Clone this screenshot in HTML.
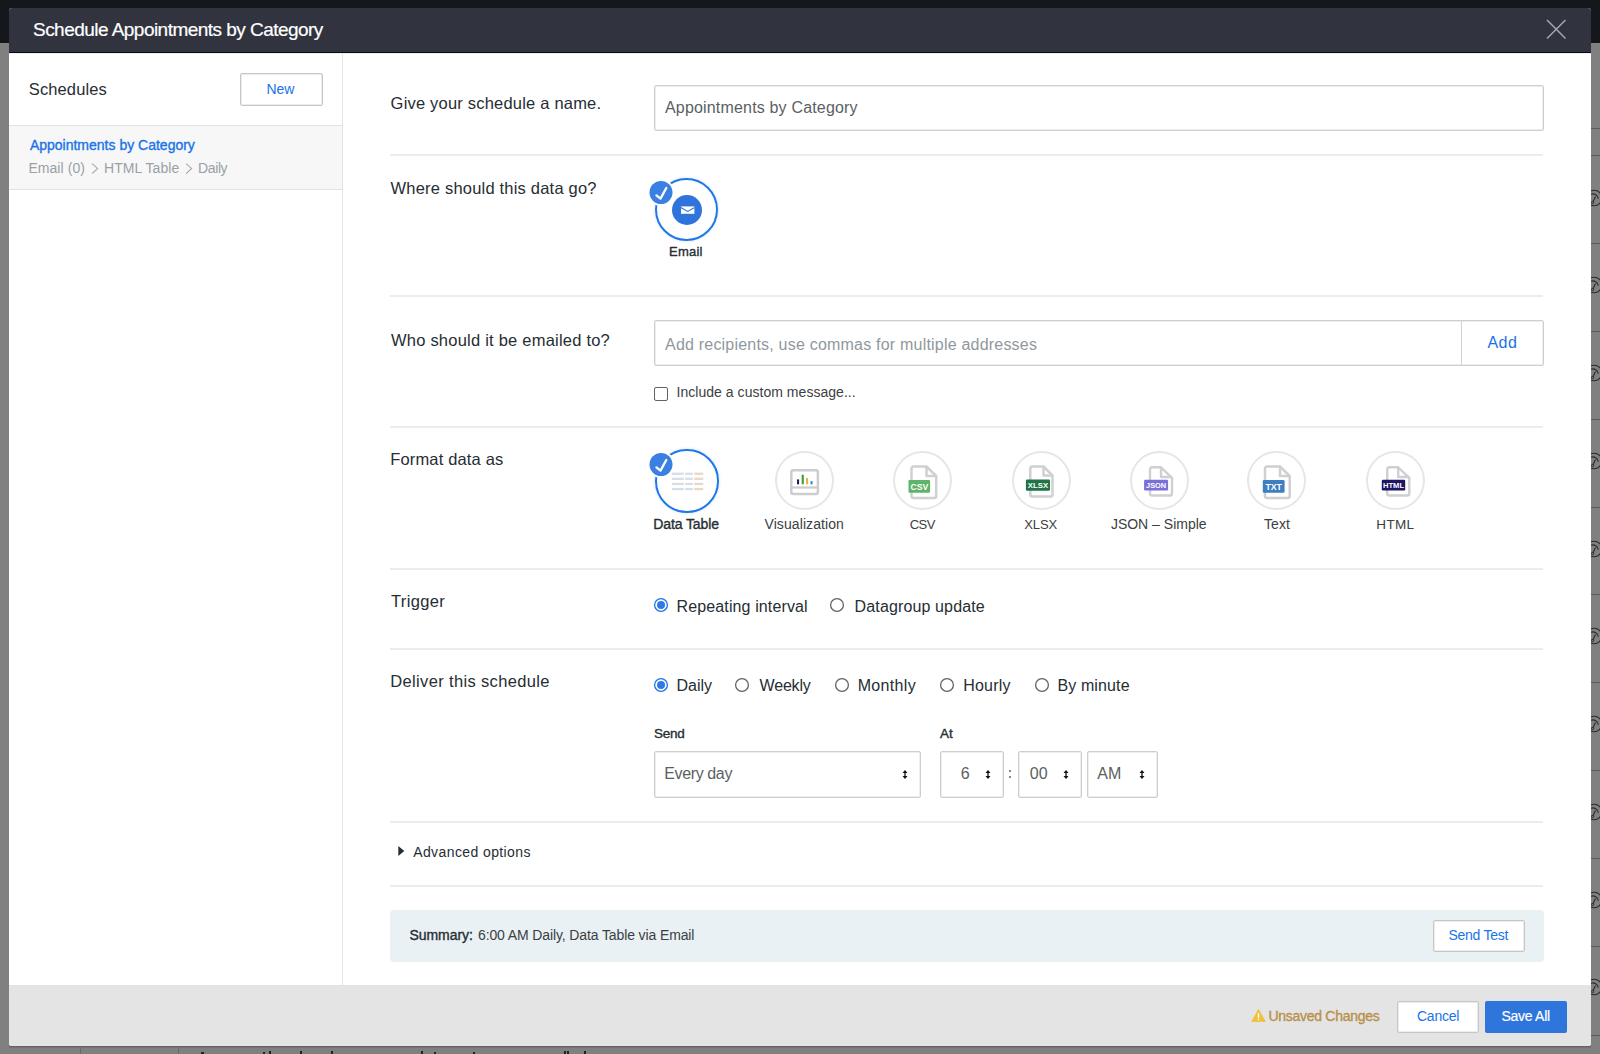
<!DOCTYPE html>
<html><head><meta charset="utf-8">
<style>
*{box-sizing:border-box;margin:0;padding:0}
html,body{width:1600px;height:1054px;overflow:hidden;background:#808080;font-family:"Liberation Sans",sans-serif;position:relative}
.a{position:absolute}
.t{position:absolute;white-space:nowrap;line-height:1}

</style></head>
<body>
<div id="shapes">
<!-- background -->
<div class="a" style="left:0;top:0;width:1600px;height:43px;background:#14171b"></div>
<!-- right strip lines -->
<div class="a" style="left:1591px;top:128px;width:9px;height:1px;background:#5c5c5c"></div>
<div class="a" style="left:1591px;top:155px;width:9px;height:1px;background:#5c5c5c"></div>
<div class="a" style="left:1591px;top:243px;width:9px;height:1px;background:#5c5c5c"></div>
<div class="a" style="left:1591px;top:331px;width:9px;height:1px;background:#5c5c5c"></div>
<div class="a" style="left:1591px;top:419px;width:9px;height:1px;background:#5c5c5c"></div>
<div class="a" style="left:1591px;top:507px;width:9px;height:1px;background:#5c5c5c"></div>
<div class="a" style="left:1591px;top:594px;width:9px;height:1px;background:#5c5c5c"></div>
<div class="a" style="left:1591px;top:682px;width:9px;height:1px;background:#5c5c5c"></div>
<div class="a" style="left:1591px;top:770px;width:9px;height:1px;background:#5c5c5c"></div>
<div class="a" style="left:1591px;top:858px;width:9px;height:1px;background:#5c5c5c"></div>
<div class="a" style="left:1591px;top:946px;width:9px;height:1px;background:#5c5c5c"></div>
<div class="a" style="left:1591px;top:1035px;width:9px;height:1px;background:#5c5c5c"></div>
<svg class="a" style="left:1586px;top:187.5px" width="14" height="20" viewBox="0 0 14 20"><circle cx="8" cy="10" r="7.8" fill="none" stroke="#2a2a2a" stroke-width="1.1"/><path d="M5 6.3A5.4 5.4 0 0 1 12.3 10.8" fill="none" stroke="#2a2a2a" stroke-width="1.1"/><path d="M6.8 14.2L9.5 8.5" stroke="#2a2a2a" stroke-width="1.1"/><circle cx="6.5" cy="14.6" r="1.2" fill="none" stroke="#2a2a2a" stroke-width="0.9"/></svg>
<svg class="a" style="left:1586px;top:275.2px" width="14" height="20" viewBox="0 0 14 20"><circle cx="8" cy="10" r="7.8" fill="none" stroke="#2a2a2a" stroke-width="1.1"/><path d="M5 6.3A5.4 5.4 0 0 1 12.3 10.8" fill="none" stroke="#2a2a2a" stroke-width="1.1"/><path d="M6.8 14.2L9.5 8.5" stroke="#2a2a2a" stroke-width="1.1"/><circle cx="6.5" cy="14.6" r="1.2" fill="none" stroke="#2a2a2a" stroke-width="0.9"/></svg>
<svg class="a" style="left:1586px;top:363.0px" width="14" height="20" viewBox="0 0 14 20"><circle cx="8" cy="10" r="7.8" fill="none" stroke="#2a2a2a" stroke-width="1.1"/><path d="M5 6.3A5.4 5.4 0 0 1 12.3 10.8" fill="none" stroke="#2a2a2a" stroke-width="1.1"/><path d="M6.8 14.2L9.5 8.5" stroke="#2a2a2a" stroke-width="1.1"/><circle cx="6.5" cy="14.6" r="1.2" fill="none" stroke="#2a2a2a" stroke-width="0.9"/></svg>
<svg class="a" style="left:1586px;top:450.8px" width="14" height="20" viewBox="0 0 14 20"><circle cx="8" cy="10" r="7.8" fill="none" stroke="#2a2a2a" stroke-width="1.1"/><path d="M5 6.3A5.4 5.4 0 0 1 12.3 10.8" fill="none" stroke="#2a2a2a" stroke-width="1.1"/><path d="M6.8 14.2L9.5 8.5" stroke="#2a2a2a" stroke-width="1.1"/><circle cx="6.5" cy="14.6" r="1.2" fill="none" stroke="#2a2a2a" stroke-width="0.9"/></svg>
<svg class="a" style="left:1586px;top:538.5px" width="14" height="20" viewBox="0 0 14 20"><circle cx="8" cy="10" r="7.8" fill="none" stroke="#2a2a2a" stroke-width="1.1"/><path d="M5 6.3A5.4 5.4 0 0 1 12.3 10.8" fill="none" stroke="#2a2a2a" stroke-width="1.1"/><path d="M6.8 14.2L9.5 8.5" stroke="#2a2a2a" stroke-width="1.1"/><circle cx="6.5" cy="14.6" r="1.2" fill="none" stroke="#2a2a2a" stroke-width="0.9"/></svg>
<svg class="a" style="left:1586px;top:626.2px" width="14" height="20" viewBox="0 0 14 20"><circle cx="8" cy="10" r="7.8" fill="none" stroke="#2a2a2a" stroke-width="1.1"/><path d="M5 6.3A5.4 5.4 0 0 1 12.3 10.8" fill="none" stroke="#2a2a2a" stroke-width="1.1"/><path d="M6.8 14.2L9.5 8.5" stroke="#2a2a2a" stroke-width="1.1"/><circle cx="6.5" cy="14.6" r="1.2" fill="none" stroke="#2a2a2a" stroke-width="0.9"/></svg>
<svg class="a" style="left:1586px;top:714.0px" width="14" height="20" viewBox="0 0 14 20"><circle cx="8" cy="10" r="7.8" fill="none" stroke="#2a2a2a" stroke-width="1.1"/><path d="M5 6.3A5.4 5.4 0 0 1 12.3 10.8" fill="none" stroke="#2a2a2a" stroke-width="1.1"/><path d="M6.8 14.2L9.5 8.5" stroke="#2a2a2a" stroke-width="1.1"/><circle cx="6.5" cy="14.6" r="1.2" fill="none" stroke="#2a2a2a" stroke-width="0.9"/></svg>
<svg class="a" style="left:1586px;top:801.8px" width="14" height="20" viewBox="0 0 14 20"><circle cx="8" cy="10" r="7.8" fill="none" stroke="#2a2a2a" stroke-width="1.1"/><path d="M5 6.3A5.4 5.4 0 0 1 12.3 10.8" fill="none" stroke="#2a2a2a" stroke-width="1.1"/><path d="M6.8 14.2L9.5 8.5" stroke="#2a2a2a" stroke-width="1.1"/><circle cx="6.5" cy="14.6" r="1.2" fill="none" stroke="#2a2a2a" stroke-width="0.9"/></svg>
<svg class="a" style="left:1586px;top:889.5px" width="14" height="20" viewBox="0 0 14 20"><circle cx="8" cy="10" r="7.8" fill="none" stroke="#2a2a2a" stroke-width="1.1"/><path d="M5 6.3A5.4 5.4 0 0 1 12.3 10.8" fill="none" stroke="#2a2a2a" stroke-width="1.1"/><path d="M6.8 14.2L9.5 8.5" stroke="#2a2a2a" stroke-width="1.1"/><circle cx="6.5" cy="14.6" r="1.2" fill="none" stroke="#2a2a2a" stroke-width="0.9"/></svg>
<svg class="a" style="left:1586px;top:977.2px" width="14" height="20" viewBox="0 0 14 20"><circle cx="8" cy="10" r="7.8" fill="none" stroke="#2a2a2a" stroke-width="1.1"/><path d="M5 6.3A5.4 5.4 0 0 1 12.3 10.8" fill="none" stroke="#2a2a2a" stroke-width="1.1"/><path d="M6.8 14.2L9.5 8.5" stroke="#2a2a2a" stroke-width="1.1"/><circle cx="6.5" cy="14.6" r="1.2" fill="none" stroke="#2a2a2a" stroke-width="0.9"/></svg>
<div class="a" style="left:80px;top:1046px;width:1px;height:8px;background:#6a6a6a"></div>
<div class="a" style="left:178px;top:1046px;width:1px;height:8px;background:#6a6a6a"></div>
<div class="a" style="left:9px;top:1046px;width:1582px;height:1px;background:#626262"></div>
<div class="a" style="left:9px;top:1047px;width:1582px;height:1px;background:#747474"></div>

<!-- bottom text marks -->
<div class="a" style="left:201px;top:1052px;width:3px;height:2px;background:#222"></div>
<div class="a" style="left:263px;top:1052px;width:2px;height:2px;background:#222"></div>
<div class="a" style="left:268.5px;top:1051px;width:2px;height:3px;background:#222"></div>
<div class="a" style="left:299.5px;top:1051px;width:2px;height:3px;background:#222"></div>
<div class="a" style="left:331px;top:1051px;width:2px;height:3px;background:#222"></div>
<div class="a" style="left:421px;top:1051px;width:2px;height:3px;background:#222"></div>
<div class="a" style="left:433.5px;top:1052px;width:2px;height:2px;background:#222"></div>
<div class="a" style="left:472.5px;top:1052px;width:2px;height:2px;background:#222"></div>
<div class="a" style="left:564px;top:1051px;width:2px;height:3px;background:#222"></div>
<div class="a" style="left:567px;top:1051px;width:2px;height:3px;background:#222"></div>
<div class="a" style="left:583.5px;top:1051px;width:2px;height:3px;background:#222"></div>
<!-- dialog -->
<div class="a" style="left:9px;top:8px;width:1582px;height:1038px;background:#fff;border-radius:3px;overflow:hidden">
  <div class="a" style="left:0;top:0;width:1582px;height:45px;background:#31333f"></div>
  <div class="a" style="left:0;top:44px;width:1582px;height:1px;background:#0b0c10"></div>
  <div class="a" style="left:0;top:977px;width:1582px;height:61px;background:#e4e4e4"></div>
</div>
<div class="a" style="left:9px;top:53px;width:1582px;height:1px;background:#efefef"></div>
<!-- close X -->
<svg class="a" style="left:1545px;top:18px" width="23" height="23" viewBox="0 0 23 23"><path d="M2 2L20.5 20.5M20.5 2L2 20.5" stroke="#a6a8ae" stroke-width="1.5"/></svg>

<!-- sidebar -->
<div class="a" style="left:342px;top:53px;width:1px;height:932px;background:#e4e4e4"></div>
<div class="a" style="left:240px;top:73px;width:83px;height:33px;border:1px solid #c6c6c6;box-shadow:inset 0 0 0 1px #ececec;border-radius:2px;background:#fff"></div>
<div class="a" style="left:9px;top:125px;width:333px;height:65px;background:#f7f7f7;border-top:1px solid #e2e2e2;border-bottom:1px solid #e2e2e2"></div>

<!-- dividers -->
<div class="a" style="left:390px;top:154px;width:1153px;height:2px;background:#ececec"></div>
<div class="a" style="left:390px;top:295px;width:1153px;height:2px;background:#ececec"></div>
<div class="a" style="left:390px;top:426px;width:1153px;height:2px;background:#ececec"></div>
<div class="a" style="left:390px;top:568px;width:1153px;height:2px;background:#ececec"></div>
<div class="a" style="left:390px;top:648px;width:1153px;height:2px;background:#ececec"></div>
<div class="a" style="left:390px;top:821px;width:1153px;height:2px;background:#ececec"></div>
<div class="a" style="left:390px;top:885px;width:1153px;height:2px;background:#ececec"></div>

<!-- name input -->
<div class="a" style="left:654px;top:85px;width:890px;height:46px;border:1px solid #cecece;box-shadow:inset 0 0 0 1px #eeeeee;border-radius:2px"></div>

<!-- email destination -->
<div class="a" style="left:655px;top:177.5px;width:63px;height:63px;border:2px solid #1f78e6;border-radius:50%;box-shadow:0 0 3px rgba(26,115,232,.25)"></div>
<div class="a" style="left:672px;top:194.5px;width:30px;height:30px;border-radius:50%;background:#2f74dc"></div>
<svg class="a" style="left:679.5px;top:204.5px" width="16" height="11" viewBox="0 0 16 11"><rect x="1" y="1.4" width="13.4" height="7.4" fill="#fff"/><path d="M0.8 2.6L7.7 6.4L14.6 2.6" stroke="#2f74dc" stroke-width="1.1" fill="none"/></svg>
<svg class="a" style="left:647px;top:179px" width="28" height="28" viewBox="0 0 28 28"><circle cx="14" cy="13.5" r="13.5" fill="#fff"/><circle cx="14" cy="13.5" r="11.5" fill="#3a80e3"/><path d="M9.4 16.4L13.5 19.6L19.3 9" stroke="#fff" stroke-width="2.3" fill="none" stroke-linecap="round" stroke-linejoin="round"/></svg>

<!-- recipients input -->
<div class="a" style="left:654px;top:320px;width:890px;height:46px;border:1px solid #cecece;box-shadow:inset 0 0 0 1px #eeeeee;border-radius:2px"></div>
<div class="a" style="left:1461px;top:320px;width:1px;height:46px;background:#d2d2d2"></div>
<div class="a" style="left:654px;top:387px;width:14px;height:14px;border:1.2px solid #5f6368;border-radius:2px;background:#fff"></div>

<!-- format icons -->
<div class="a" style="left:655px;top:449px;width:63.5px;height:63.5px;border:2px solid #1f78e6;border-radius:50%;box-shadow:0 0 3px rgba(26,115,232,.25)"></div>
<svg class="a" style="left:671px;top:472px" width="34" height="20" viewBox="0 0 34 20">
 <g fill="#d6dee7"><rect x="0.8" y="0.6" width="12" height="2.3"/><rect x="0.8" y="5.7" width="12" height="2.3"/><rect x="0.8" y="10.8" width="12" height="2.3"/><rect x="0.8" y="15.9" width="12" height="2.3"/>
 <rect x="14.2" y="0.6" width="7.6" height="2.3"/><rect x="14.2" y="5.7" width="7.6" height="2.3"/><rect x="14.2" y="10.8" width="7.6" height="2.3"/><rect x="14.2" y="15.9" width="7.6" height="2.3"/></g>
 <g fill="#ead8c6"><rect x="23.2" y="0.6" width="9" height="2.3"/><rect x="23.2" y="5.7" width="9" height="2.3"/><rect x="23.2" y="10.8" width="9" height="2.3"/><rect x="23.2" y="15.9" width="9" height="2.3"/></g>
</svg>
<svg class="a" style="left:647px;top:451px" width="28" height="28" viewBox="0 0 28 28"><circle cx="14" cy="13.5" r="13.5" fill="#fff"/><circle cx="14" cy="13.5" r="11.5" fill="#3a80e3"/><path d="M9.4 16.4L13.5 19.6L19.3 9" stroke="#fff" stroke-width="2.3" fill="none" stroke-linecap="round" stroke-linejoin="round"/></svg>

<!-- visualization -->
<div class="a" style="left:774.5px;top:451px;width:59px;height:59px;border:2px solid #e5e6e8;border-radius:50%"></div>
<svg class="a" style="left:789px;top:467.5px" width="31" height="29" viewBox="0 0 31 29">
 <rect x="2.3" y="2.3" width="26.6" height="23.8" rx="2" fill="none" stroke="#cdcdcf" stroke-width="2.5"/>
 <line x1="2" y1="19.5" x2="29" y2="19.5" stroke="#cdcdcf" stroke-width="2.2"/>
 <rect x="8" y="11.4" width="2.1" height="4.9" fill="#1d2450"/>
 <rect x="12.7" y="6.7" width="2.1" height="9.6" fill="#3c9c3c"/>
 <rect x="17" y="10" width="2.1" height="6.3" fill="#e5b53c"/>
 <rect x="21.5" y="13.1" width="2.1" height="3.2" fill="#3b86d6"/>
</svg>

<!-- generic file icons -->
<div class="a" style="left:893px;top:451px;width:59px;height:59px;border:2px solid #e5e6e8;border-radius:50%"></div>
<div class="a" style="left:1011.5px;top:451px;width:59px;height:59px;border:2px solid #e5e6e8;border-radius:50%"></div>
<div class="a" style="left:1129.5px;top:451px;width:59px;height:59px;border:2px solid #e5e6e8;border-radius:50%"></div>
<div class="a" style="left:1247px;top:451px;width:59px;height:59px;border:2px solid #e5e6e8;border-radius:50%"></div>
<div class="a" style="left:1366px;top:451px;width:59px;height:59px;border:2px solid #e5e6e8;border-radius:50%"></div>

<!-- CSV -->
<svg class="a" style="left:908px;top:464px" width="32" height="36" viewBox="0 0 32 36">
 <path d="M5.5 2.5H18.5L28.2 12V32A2 2 0 0 1 26.2 34H5.5A2 2 0 0 1 3.5 32V4.5A2 2 0 0 1 5.5 2.5Z" fill="#fff" stroke="#cfd0d2" stroke-width="2.5" stroke-linejoin="round"/>
 <path d="M18.5 2.5V12H28.2" fill="none" stroke="#cfd0d2" stroke-width="2.5" stroke-linejoin="round"/>
 <rect x="0.5" y="16" width="21.6" height="12.7" rx="1.3" fill="#5fb36a"/>
 <text x="11.3" y="26" text-anchor="middle" font-family="Liberation Sans" font-weight="700" font-size="8.6" fill="#fff">CSV</text>
</svg>
<!-- XLSX -->
<svg class="a" style="left:1025px;top:464px" width="32" height="36" viewBox="0 0 32 36">
 <path d="M7.3 2.5H18.5L27.5 11.5V30.5A2 2 0 0 1 25.5 32.5H7.3A2 2 0 0 1 5.3 30.5V4.5A2 2 0 0 1 7.3 2.5Z" fill="#fff" stroke="#cfd0d2" stroke-width="2.5" stroke-linejoin="round"/>
 <path d="M18.5 2.5V11.5H27.5" fill="none" stroke="#cfd0d2" stroke-width="2.5" stroke-linejoin="round"/>
 <rect x="0.9" y="15.4" width="24.1" height="11.4" rx="1.3" fill="#217346"/>
 <text x="13" y="24.3" text-anchor="middle" font-family="Liberation Sans" font-weight="700" font-size="7.8" fill="#fff">XLSX</text>
</svg>
<!-- JSON -->
<svg class="a" style="left:1143px;top:466px" width="32" height="36" viewBox="0 0 32 36">
 <path d="M9 1.3H18L29 11.8V27.5A2 2 0 0 1 27 29.5H9A2 2 0 0 1 7 27.5V3.3A2 2 0 0 1 9 1.3Z" fill="#fff" stroke="#cfd0d2" stroke-width="2.4" stroke-linejoin="round"/>
 <path d="M18 1.3V11H29" fill="none" stroke="#cfd0d2" stroke-width="2.4" stroke-linejoin="round"/>
 <rect x="1.1" y="13.8" width="24" height="10.7" rx="1.3" fill="#7b6fd8"/>
 <text x="13.1" y="22.2" text-anchor="middle" font-family="Liberation Sans" font-weight="700" font-size="7.4" fill="#fff">JSON</text>
</svg>
<!-- TXT -->
<svg class="a" style="left:1262px;top:464px" width="32" height="36" viewBox="0 0 32 36">
 <path d="M5 2.5H18L27.7 12V32A2 2 0 0 1 25.7 34H5A2 2 0 0 1 3 32V4.5A2 2 0 0 1 5 2.5Z" fill="#fff" stroke="#cfd0d2" stroke-width="2.5" stroke-linejoin="round"/>
 <path d="M18 2.5V12H27.7" fill="none" stroke="#cfd0d2" stroke-width="2.5" stroke-linejoin="round"/>
 <rect x="0.8" y="16" width="21.8" height="12.7" rx="1.3" fill="#3e7fc2"/>
 <text x="11.7" y="26" text-anchor="middle" font-family="Liberation Sans" font-weight="700" font-size="8.8" fill="#fff">TXT</text>
</svg>
<!-- HTML -->
<svg class="a" style="left:1381px;top:466px" width="32" height="36" viewBox="0 0 32 36">
 <path d="M8.2 1.3H17.2L28.3 11.8V27.5A2 2 0 0 1 26.3 29.5H8.2A2 2 0 0 1 6.2 27.5V3.3A2 2 0 0 1 8.2 1.3Z" fill="#fff" stroke="#cfd0d2" stroke-width="2.4" stroke-linejoin="round"/>
 <path d="M17.2 1.3V11H28.3" fill="none" stroke="#cfd0d2" stroke-width="2.4" stroke-linejoin="round"/>
 <rect x="0.8" y="13.7" width="23.4" height="10.8" rx="1.3" fill="#1e1563"/>
 <text x="12.5" y="22.2" text-anchor="middle" font-family="Liberation Sans" font-weight="700" font-size="7.6" fill="#fff">HTML</text>
</svg>

<!-- radios trigger -->
<svg class="a" style="left:653px;top:597px" width="16" height="16" viewBox="0 0 16 16"><circle cx="8" cy="8" r="6.4" fill="#fff" stroke="#1a73e8" stroke-width="1.3"/><circle cx="8" cy="8" r="4" fill="#2f7ae5"/></svg>
<svg class="a" style="left:829px;top:597px" width="16" height="16" viewBox="0 0 16 16"><circle cx="8" cy="8" r="6.4" fill="#fff" stroke="#5f6368" stroke-width="1.3"/></svg>
<!-- radios deliver -->
<svg class="a" style="left:653px;top:676.5px" width="16" height="16" viewBox="0 0 16 16"><circle cx="8" cy="8" r="6.4" fill="#fff" stroke="#1a73e8" stroke-width="1.3"/><circle cx="8" cy="8" r="4" fill="#2f7ae5"/></svg>
<svg class="a" style="left:734px;top:676.5px" width="16" height="16" viewBox="0 0 16 16"><circle cx="8" cy="8" r="6.4" fill="#fff" stroke="#5f6368" stroke-width="1.3"/></svg>
<svg class="a" style="left:834px;top:676.5px" width="16" height="16" viewBox="0 0 16 16"><circle cx="8" cy="8" r="6.4" fill="#fff" stroke="#5f6368" stroke-width="1.3"/></svg>
<svg class="a" style="left:939px;top:676.5px" width="16" height="16" viewBox="0 0 16 16"><circle cx="8" cy="8" r="6.4" fill="#fff" stroke="#5f6368" stroke-width="1.3"/></svg>
<svg class="a" style="left:1034px;top:676.5px" width="16" height="16" viewBox="0 0 16 16"><circle cx="8" cy="8" r="6.4" fill="#fff" stroke="#5f6368" stroke-width="1.3"/></svg>

<!-- selects -->
<div class="a" style="left:654px;top:751px;width:267px;height:47px;border:1px solid #cecece;box-shadow:inset 0 0 0 1px #eeeeee;border-radius:2px"></div>
<div class="a" style="left:940px;top:751px;width:64px;height:47px;border:1px solid #cecece;box-shadow:inset 0 0 0 1px #eeeeee;border-radius:2px"></div>
<div class="a" style="left:1018px;top:751px;width:64px;height:47px;border:1px solid #cecece;box-shadow:inset 0 0 0 1px #eeeeee;border-radius:2px"></div>
<div class="a" style="left:1087px;top:751px;width:71px;height:47px;border:1px solid #cecece;box-shadow:inset 0 0 0 1px #eeeeee;border-radius:2px"></div>
<svg class="a" style="left:901px;top:769px" width="8" height="11" viewBox="0 0 8 11"><path d="M4 1L6.5 4H1.5Z M4 10L6.5 7H1.5Z" fill="#111"/><rect x="3.35" y="3.5" width="1.3" height="4" fill="#111"/></svg>
<svg class="a" style="left:983.5px;top:769px" width="8" height="11" viewBox="0 0 8 11"><path d="M4 1L6.5 4H1.5Z M4 10L6.5 7H1.5Z" fill="#111"/><rect x="3.35" y="3.5" width="1.3" height="4" fill="#111"/></svg>
<svg class="a" style="left:1061.5px;top:769px" width="8" height="11" viewBox="0 0 8 11"><path d="M4 1L6.5 4H1.5Z M4 10L6.5 7H1.5Z" fill="#111"/><rect x="3.35" y="3.5" width="1.3" height="4" fill="#111"/></svg>
<svg class="a" style="left:1138px;top:769px" width="8" height="11" viewBox="0 0 8 11"><path d="M4 1L6.5 4H1.5Z M4 10L6.5 7H1.5Z" fill="#111"/><rect x="3.35" y="3.5" width="1.3" height="4" fill="#111"/></svg>
<div class="a" style="left:1009px;top:770px;width:2px;height:2px;border-radius:1px;background:#5f6368"></div>
<div class="a" style="left:1009px;top:776px;width:2px;height:2px;border-radius:1px;background:#5f6368"></div>

<!-- advanced triangle -->
<svg class="a" style="left:398px;top:846px" width="7" height="10" viewBox="0 0 7 10"><path d="M0.3 0L6.3 5L0.3 10Z" fill="#262d33"/></svg>

<!-- summary -->
<div class="a" style="left:390px;top:910px;width:1154px;height:52px;background:#e9f1f4;border-radius:4px"></div>
<div class="a" style="left:1433px;top:920px;width:92px;height:32px;border:1px solid #c6c6c6;box-shadow:inset 0 0 0 1px #ececec;border-radius:2px;background:#fff"></div>

<!-- footer -->
<svg class="a" style="left:1251px;top:1009px" width="15" height="13" viewBox="0 0 15 13"><path d="M7.5 0.5L14.3 12.4H0.7Z" fill="#f0c23b" stroke="#f0c23b" stroke-width="0.8" stroke-linejoin="round"/><rect x="6.8" y="4.3" width="1.4" height="4.6" fill="#fff"/><rect x="6.8" y="9.8" width="1.4" height="1.4" fill="#fff"/></svg>
<div class="a" style="left:1397px;top:1001px;width:82px;height:32px;border:1px solid #c6c6c6;box-shadow:inset 0 0 0 1px #ececec;border-radius:2px;background:#fff"></div>
<div class="a" style="left:1485px;top:1001px;width:82px;height:32px;border-radius:2px;background:#2f76dc"></div>
<!-- sidebar chevrons -->
<svg class="a" style="left:91px;top:163px" width="8" height="12" viewBox="0 0 8 12"><path d="M1.1 0.7L6.6 5.4L1.1 10.6" fill="none" stroke="#a3a7ab" stroke-width="1.1"/></svg>
<svg class="a" style="left:185px;top:163px" width="8" height="12" viewBox="0 0 8 12"><path d="M1.1 0.7L6.6 5.4L1.1 10.6" fill="none" stroke="#a3a7ab" stroke-width="1.1"/></svg>

</div>
<div id="title" class="t" style="left:33.00px;top:20.01px;font-size:19px;font-weight:400;color:#ffffff;-webkit-text-stroke:0.2px #ffffff;letter-spacing:-0.531px">Schedule Appointments by Category</div>
<div id="sched" class="t" style="left:28.75px;top:81.01px;font-size:16.5px;font-weight:400;color:#262d33;letter-spacing:0.125px">Schedules</div>
<div id="new" class="t" style="left:266.40px;top:81.91px;font-size:14px;font-weight:400;color:#1a73e8;letter-spacing:0.000px">New</div>
<div id="stitle" class="t" style="left:29.90px;top:137.71px;font-size:14px;font-weight:400;color:#1a73e8;-webkit-text-stroke:0.35px #1a73e8;letter-spacing:-0.000px">Appointments by Category</div>
<div id="ss1" class="t" style="left:28.40px;top:161.01px;font-size:14px;font-weight:400;color:#9aa0a6;letter-spacing:0.062px">Email (0)</div>
<div id="ss2" class="t" style="left:104.00px;top:161.01px;font-size:14px;font-weight:400;color:#9aa0a6;letter-spacing:0.056px">HTML Table</div>
<div id="ss3" class="t" style="left:198.00px;top:161.01px;font-size:14px;font-weight:400;color:#9aa0a6;letter-spacing:-0.375px">Daily</div>
<div id="l1" class="t" style="left:390.60px;top:95.01px;font-size:16.5px;font-weight:400;color:#262d33;letter-spacing:0.200px">Give your schedule a name.</div>
<div id="inp1" class="t" style="left:665.00px;top:99.50px;font-size:16px;font-weight:400;color:#5a5f63;letter-spacing:0.174px">Appointments by Category</div>
<div id="l2" class="t" style="left:390.60px;top:179.51px;font-size:16.5px;font-weight:400;color:#262d33;letter-spacing:0.200px">Where should this data go?</div>
<div id="email" class="t" style="left:669.00px;top:244.61px;font-size:13px;font-weight:400;color:#262d33;-webkit-text-stroke:0.35px #262d33;letter-spacing:0.250px">Email</div>
<div id="l3" class="t" style="left:391.00px;top:332.31px;font-size:16.5px;font-weight:400;color:#262d33;letter-spacing:0.222px">Who should it be emailed to?</div>
<div id="ph" class="t" style="left:665.00px;top:337.00px;font-size:16px;font-weight:400;color:#8f989e;letter-spacing:0.208px">Add recipients, use commas for multiple addresses</div>
<div id="add" class="t" style="left:1487.40px;top:335.22px;font-size:16px;font-weight:400;color:#1a73e8;letter-spacing:0.500px">Add</div>
<div id="incl" class="t" style="left:676.50px;top:385.01px;font-size:14px;font-weight:400;color:#3c4043;letter-spacing:0.038px">Include a custom message...</div>
<div id="l4" class="t" style="left:390.25px;top:451.01px;font-size:16.5px;font-weight:400;color:#262d33;letter-spacing:0.154px">Format data as</div>
<div id="f1" class="t" style="left:653.30px;top:517.01px;font-size:14px;font-weight:400;color:#262d33;-webkit-text-stroke:0.35px #262d33;letter-spacing:-0.111px">Data Table</div>
<div id="f2" class="t" style="left:764.50px;top:517.01px;font-size:14px;font-weight:400;color:#3c4043;letter-spacing:0.083px">Visualization</div>
<div id="f3" class="t" style="left:909.80px;top:518.01px;font-size:13px;font-weight:400;color:#3c4043;letter-spacing:-0.600px">CSV</div>
<div id="f4" class="t" style="left:1024.30px;top:518.01px;font-size:13px;font-weight:400;color:#3c4043;letter-spacing:-0.133px">XLSX</div>
<div id="f5" class="t" style="left:1110.90px;top:517.01px;font-size:14px;font-weight:400;color:#3c4043;letter-spacing:-0.000px">JSON – Simple</div>
<div id="f6" class="t" style="left:1264.10px;top:517.01px;font-size:14px;font-weight:400;color:#3c4043;letter-spacing:0.000px">Text</div>
<div id="f7" class="t" style="left:1376.30px;top:518.01px;font-size:13.5px;font-weight:400;color:#3c4043;letter-spacing:0.333px">HTML</div>
<div id="l5" class="t" style="left:391.00px;top:593.26px;font-size:16.5px;font-weight:400;color:#262d33;letter-spacing:0.333px">Trigger</div>
<div id="r1" class="t" style="left:676.60px;top:598.90px;font-size:16px;font-weight:400;color:#262d33;letter-spacing:0.118px">Repeating interval</div>
<div id="r2" class="t" style="left:854.60px;top:598.90px;font-size:16px;font-weight:400;color:#262d33;letter-spacing:0.133px">Datagroup update</div>
<div id="l6" class="t" style="left:390.25px;top:673.26px;font-size:16.5px;font-weight:400;color:#262d33;letter-spacing:0.350px">Deliver this schedule</div>
<div id="d1" class="t" style="left:676.50px;top:678.40px;font-size:16px;font-weight:400;color:#262d33;letter-spacing:0.000px">Daily</div>
<div id="d2" class="t" style="left:759.60px;top:678.40px;font-size:16px;font-weight:400;color:#262d33;letter-spacing:-0.200px">Weekly</div>
<div id="d3" class="t" style="left:857.70px;top:678.40px;font-size:16px;font-weight:400;color:#262d33;letter-spacing:0.333px">Monthly</div>
<div id="d4" class="t" style="left:963.20px;top:678.40px;font-size:16px;font-weight:400;color:#262d33;letter-spacing:0.200px">Hourly</div>
<div id="d5" class="t" style="left:1057.40px;top:678.40px;font-size:16px;font-weight:400;color:#262d33;letter-spacing:0.125px">By minute</div>
<div id="send" class="t" style="left:654.00px;top:727.21px;font-size:13.5px;font-weight:400;color:#262d33;-webkit-text-stroke:0.35px #262d33;letter-spacing:-0.267px">Send</div>
<div id="at" class="t" style="left:940.00px;top:727.41px;font-size:13.5px;font-weight:400;color:#262d33;-webkit-text-stroke:0.35px #262d33;letter-spacing:0.000px">At</div>
<div id="every" class="t" style="left:664.25px;top:766.00px;font-size:16px;font-weight:400;color:#5a5f63;letter-spacing:-0.375px">Every day</div>
<div id="h6" class="t" style="left:960.75px;top:766.00px;font-size:16px;font-weight:400;color:#5a5f63;letter-spacing:0.000px">6</div>
<div id="m00" class="t" style="left:1029.75px;top:766.00px;font-size:16px;font-weight:400;color:#5a5f63;letter-spacing:0.000px">00</div>
<div id="am" class="t" style="left:1097.25px;top:766.00px;font-size:16px;font-weight:400;color:#5a5f63;letter-spacing:0.000px">AM</div>
<div id="adv" class="t" style="left:413.20px;top:844.81px;font-size:14px;font-weight:400;color:#262d33;letter-spacing:0.400px">Advanced options</div>
<div id="sum" class="t" style="left:409.40px;top:928.01px;font-size:14px;font-weight:400;color:#262d33;-webkit-text-stroke:0.35px #262d33;letter-spacing:-0.029px">Summary:</div>
<div id="sumt" class="t" style="left:478.00px;top:928.01px;font-size:14px;font-weight:400;color:#3c4043;letter-spacing:-0.118px">6:00 AM Daily, Data Table via Email</div>
<div id="stest" class="t" style="left:1448.40px;top:928.01px;font-size:14px;font-weight:400;color:#1a73e8;letter-spacing:-0.250px">Send Test</div>
<div id="unsaved" class="t" style="left:1268.50px;top:1008.51px;font-size:14px;font-weight:400;color:#b8904a;-webkit-text-stroke:0.35px #b8904a;letter-spacing:-0.286px">Unsaved Changes</div>
<div id="cancel" class="t" style="left:1416.90px;top:1009.21px;font-size:14px;font-weight:400;color:#1a73e8;letter-spacing:-0.200px">Cancel</div>
<div id="save" class="t" style="left:1501.50px;top:1009.21px;font-size:14px;font-weight:400;color:#ffffff;-webkit-text-stroke:0.2px #ffffff;letter-spacing:-0.286px">Save All</div>
</body></html>
